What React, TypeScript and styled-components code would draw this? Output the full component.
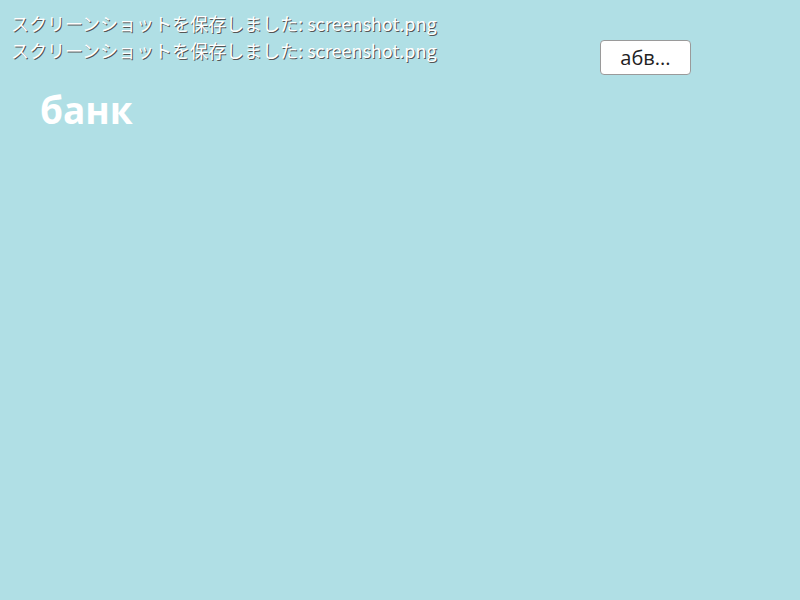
import styled, { createGlobalStyle } from 'styled-components';

const GlobalStyle = createGlobalStyle`
  html, body {
    margin: 0;
    padding: 0;
    background: #b0dfe5;
  }
  body {
    font-family: 'Open Sans', 'Noto Sans CJK JP', sans-serif;
  }
`;

const Screen = styled.div`
  position: relative;
  width: 800px;
  height: 600px;
  overflow: hidden;
  background: #b0dfe5;
`;

// notification lines overlaid on the top-left corner
const Notices = styled.div`
  position: absolute;
  top: 10px;
  left: 11px;
  display: flex;
  flex-direction: column;
`;

const Notice = styled.div`
  font-family: 'Noto Sans CJK JP', sans-serif;
  font-size: 18px;
  line-height: 27px;
  color: #ffffff;
  text-shadow: 1px 1px 0 #555;
  white-space: nowrap;
`;

const Toolbar = styled.div`
  display: flex;
  justify-content: flex-end;
  padding: 40px 109px 0 0;
`;

const Button = styled.button`
  width: 91px;
  height: 35px;
  background: #ffffff;
  border: 1px solid #9a9a9a;
  border-radius: 4px;
  font-family: 'Open Sans', sans-serif;
  font-size: 20px;
  color: #222;
  padding: 0;
  cursor: pointer;
`;

const Title = styled.h1`
  margin: 10px 0 0 40px;
  font-family: 'Open Sans', sans-serif;
  font-size: 37px;
  font-weight: 700;
  line-height: 50px;
  color: #ffffff;
`;

export default function App() {
  const notices = ['スクリーンショットを保存しました: screenshot.png', 'スクリーンショットを保存しました: screenshot.png'];
  return (
    <Screen>
      <GlobalStyle />
      <Toolbar>
        <Button>абв...</Button>
      </Toolbar>
      <Title>банк</Title>
      <Notices>
        {notices.map((n, i) => (
          <Notice key={i}>{n}</Notice>
        ))}
      </Notices>
    </Screen>
  );
}
